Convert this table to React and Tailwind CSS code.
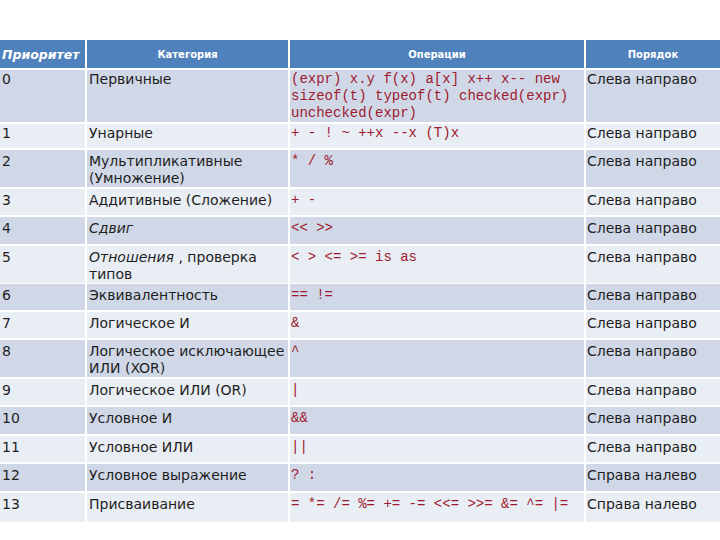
const rows = [
  { n: "0", cat: "Первичные", ops: ["(expr) x.y f(x) a[x] x++ x-- new", "sizeof(t) typeof(t) checked(expr)", "unchecked(expr)"], order: "Слева направо", h: "h-[52px]", pt: "pt-[1px]" },
  { n: "1", cat: "Унарные", ops: ["+ - ! ~ ++x --x (T)x"], order: "Слева направо", h: "h-[24px]", pt: "pt-[1px]" },
  { n: "2", cat: ["Мультипликативные", "(Умножение)"], ops: ["* / %"], order: "Слева направо", h: "h-[37px]" },
  { n: "3", cat: "Аддитивные (Сложение)", ops: ["+ -"], order: "Слева направо", h: "h-[26px]" },
  { n: "4", cat: <i>Сдвиг</i>, ops: ["<< >>"], order: "Слева направо", h: "h-[27px]" },
  { n: "5", cat: <><i>Отношения</i> , проверка типов</>, ops: ["< > <= >= is as"], order: "Слева направо", h: "h-[36px]" },
  { n: "6", cat: "Эквивалентность", ops: ["== !="], order: "Слева направо", h: "h-[26px]" },
  { n: "7", cat: "Логическое И", ops: ["&"], order: "Слева направо", h: "h-[26px]" },
  { n: "8", cat: ["Логическое исключающее", "ИЛИ (XOR)"], ops: ["^"], order: "Слева направо", h: "h-[37px]" },
  { n: "9", cat: "Логическое ИЛИ (OR)", ops: ["|"], order: "Слева направо", h: "h-[26px]" },
  { n: "10", cat: "Условное И", ops: ["&&"], order: "Слева направо", h: "h-[27px]" },
  { n: "11", cat: "Условное ИЛИ", ops: ["||"], order: "Слева направо", h: "h-[26px]" },
  { n: "12", cat: "Условное выражение", ops: ["? :"], order: "Справа налево", h: "h-[27px]" },
  { n: "13", cat: "Присваивание", ops: ["= *= /= %= += -= <<= >>= &= ^= |="], order: "Справа налево", h: "h-[29px]" },
];

function Row({ r, i }) {
  const bg = i % 2 === 0 ? "bg-[#d0d8e8]" : "bg-[#e9edf4]";
  const pt = r.pt || "pt-[3px]";
  return (
    <div className={`grid grid-cols-[85px_201px_294px_1fr] gap-x-[2px] ${r.h}`}>
      <div className={`${bg} ${pt} pl-[2px]`}>{r.n}</div>
      <div className={`${bg} ${pt} pl-[2px]`}>
        {Array.isArray(r.cat) ? r.cat.map((c) => <div key={c}>{c}</div>) : r.cat}
      </div>
      <div className={`${bg} ${pt} pl-[1px] font-['Liberation_Mono',monospace] text-[14px] text-[#9e1a2e] whitespace-pre`}>
        {r.ops.map((o) => (
          <div key={o}>{o}</div>
        ))}
      </div>
      <div className={`${bg} ${pt} pl-[1px]`}>{r.order}</div>
    </div>
  );
}

export default function App() {
  return (
    <div className="w-[720px] h-[540px] bg-white pt-[40px] font-['DejaVu_Sans',sans-serif] text-[14px] leading-[17px] text-[#1e1e1e] overflow-hidden">
      <div className="flex flex-col gap-y-[2px]">
        <div className="grid grid-cols-[85px_201px_294px_1fr] gap-x-[2px] h-[28px] text-white font-bold text-[10px]">
          <div className="bg-[#4f81bd] flex items-center pl-[2px] italic text-[12.5px]">Приоритет</div>
          <div className="bg-[#4f81bd] flex items-center justify-center">Категория</div>
          <div className="bg-[#4f81bd] flex items-center justify-center">Операции</div>
          <div className="bg-[#4f81bd] flex items-center justify-center">Порядок</div>
        </div>
        {rows.map((r, i) => (
          <Row key={r.n} r={r} i={i} />
        ))}
      </div>
    </div>
  );
}
